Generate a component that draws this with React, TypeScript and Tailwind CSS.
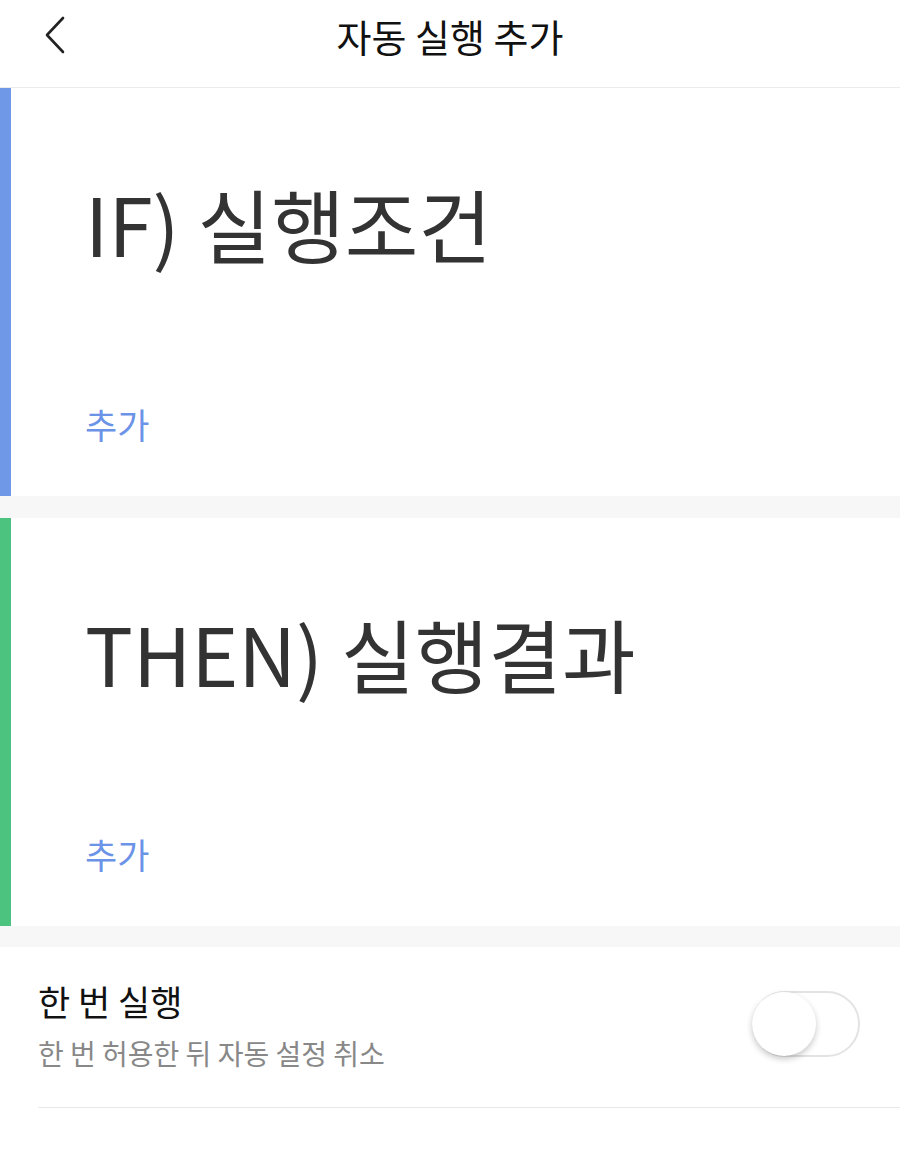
import React, { useState } from 'react';

const font = { fontFamily: '"Noto Sans CJK KR", "Noto Sans", sans-serif' };

const RuleCard = ({ title, bar }: { title: string; bar: string }) => (
  <div className="flex h-[408px] bg-white">
    <div className={`w-[11px] shrink-0 ${bar}`} />
    <div className="flex flex-1 flex-col pl-[74px]">
      <h2 className="mt-[78px] text-[80px] leading-[112px] text-[#333333]">{title}</h2>
      <button className="mt-auto mb-[47px] self-start text-[35px] leading-[50px] text-[#6b93e8]">추가</button>
    </div>
  </div>
);

export default function App() {
  const [once, setOnce] = useState(false);

  return (
    <div className="min-h-[1175px] w-[900px] bg-white" style={font}>
      {/* Header */}
      <header className="relative flex h-[88px] items-center justify-center border-b border-[#ececec]">
        <button className="absolute left-[40px] top-[12px] p-1">
          <svg width="22" height="38" viewBox="0 0 22 38" fill="none">
            <path d="M19 2 L3 19 L19 36" stroke="#222" strokeWidth="2.6" strokeLinecap="round" strokeLinejoin="round" />
          </svg>
        </button>
        <h1 className="-mt-[16px] text-[38px] text-[#111]">자동 실행 추가</h1>
      </header>

      <RuleCard title="IF) 실행조건" bar="bg-[#6f98e6]" />
      <div className="h-[22px] bg-[#f7f7f7]" />
      <RuleCard title="THEN) 실행결과" bar="bg-[#4cc47f]" />
      <div className="h-[21px] bg-[#f7f7f7]" />

      {/* Run once */}
      <div className="ml-[38px] flex items-center justify-between border-b border-[#e8e8e8] pb-[34px] pt-[28px]">
        <div>
          <div className="text-[35px] leading-[52px] text-[#111]">한 번 실행</div>
          <div className="mt-[6px] text-[28px] leading-[40px] text-[#888888]">한 번 허용한 뒤 자동 설정 취소</div>
        </div>
        <button
          onClick={() => setOnce(!once)}
          className={`relative mr-[40px] h-[66px] w-[108px] rounded-full border-2 ${once ? 'border-[#4cc47f] bg-[#4cc47f]' : 'border-[#e3e3e3] bg-white'}`}
        >
          <span
            className={`absolute top-[-1px] h-[64px] w-[64px] rounded-full bg-white shadow-[0_3px_6px_rgba(0,0,0,0.22)] ${once ? 'left-[42px]' : 'left-[-2px]'}`}
          />
        </button>
      </div>
    </div>
  );
}
